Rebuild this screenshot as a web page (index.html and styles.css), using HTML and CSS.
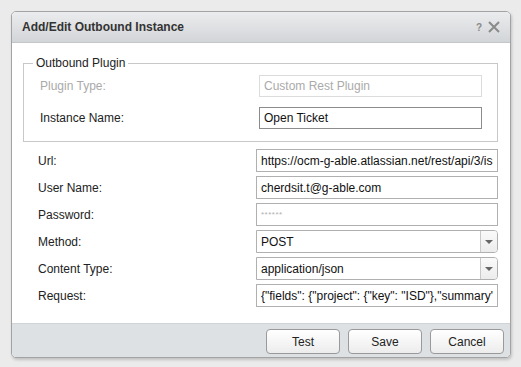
FILE: index.html
```html
<!DOCTYPE html>
<html lang="en">
<head>
    <meta charset="UTF-8">
    <meta name="viewport" content="width=device-width, initial-scale=1.0">
    <title>Add/Edit Outbound Instance</title>
    <link rel="stylesheet" href="styles.css">
</head>
<body>
    <div class="dialog">
        <!-- Title bar -->
        <div class="dialog-header">
            <span class="dialog-title">Add/Edit Outbound Instance</span>
            <span class="header-tools">
                <span class="help-icon">?</span>
                <svg class="close-icon" width="12" height="12" viewBox="0 0 12 12">
                    <path d="M1 1 L11 11 M11 1 L1 11" stroke="#8a8a8a" stroke-width="2" fill="none"/>
                </svg>
            </span>
        </div>

        <div class="dialog-body">
            <fieldset class="plugin-box">
                <legend>Outbound Plugin</legend>
                <div class="form-row">
                    <label class="disabled">Plugin Type:</label>
                    <input class="field field-disabled" type="text" value="Custom Rest Plugin" disabled>
                </div>
                <div class="form-row">
                    <label>Instance Name:</label>
                    <input class="field field-strong" type="text" value="Open Ticket">
                </div>
            </fieldset>

            <div class="form-grid">
                <label>Url:</label>
                <input class="field" type="text" value="https://ocm-g-able.atlassian.net/rest/api/3/issue">

                <label>User Name:</label>
                <input class="field" type="text" value="cherdsit.t@g-able.com">

                <label>Password:</label>
                <div class="field password"><span>******</span></div>

                <label>Method:</label>
                <div class="field select">
                    <span class="select-value">POST</span>
                    <span class="select-arrow"></span>
                </div>

                <label>Content Type:</label>
                <div class="field select">
                    <span class="select-value">application/json</span>
                    <span class="select-arrow"></span>
                </div>

                <label>Request:</label>
                <input class="field" type="text" value='{"fields": {"project": {"key": "ISD"},"summary": "Ticket"}}'>
            </div>
        </div>

        <!-- Buttons -->
        <div class="dialog-footer">
            <button class="btn">Test</button>
            <button class="btn">Save</button>
            <button class="btn">Cancel</button>
        </div>
    </div>
</body>
</html>
```

FILE: styles.css
```css
body {
    margin: 0;
    padding: 11px;
    background-color: #ebebeb;
    font-family: "Liberation Sans", Arial, sans-serif;
    font-size: 12px;
    color: #222;
}

.dialog {
    width: 498px;
    border: 1px solid #a3a3a3;
    border-radius: 5px;
    background-color: #fff;
    box-shadow: 1px 2px 3px rgba(0, 0, 0, 0.18);
    overflow: hidden;
}

.dialog-header {
    height: 30px;
    display: flex;
    align-items: center;
    justify-content: space-between;
    padding: 0 10px 0 10px;
    background: linear-gradient(#ebecee, #d2d5d8);
    border-bottom: 1px solid #c4c7ca;
}
.dialog-title {
    font-weight: bold;
    color: #333;
}
.header-tools {
    display: flex;
    align-items: center;
    gap: 6px;
}
.help-icon {
    font-size: 10px;
    font-weight: bold;
    color: #8a8a8a;
}

.dialog-body {
    padding: 13px 12px 16px 11px;
}

.plugin-box {
    margin: 0 0 7px 0;
    padding: 5px 15px 12px 16px;
    border: 1px solid #c8c8c8;
}
.plugin-box legend {
    margin-left: -7px;
    padding: 0 3px;
    color: #222;
}

.form-row {
    display: grid;
    grid-template-columns: 219px 1fr;
    align-items: center;
    margin-bottom: 10px;
}
.form-row:last-child {
    margin-bottom: 0;
}

.form-grid {
    display: grid;
    grid-template-columns: 218px 1fr;
    row-gap: 4px;
    align-items: center;
    padding-left: 15px;
}

label {
    color: #222;
}
label.disabled {
    color: #aaa;
}

.field {
    box-sizing: border-box;
    height: 22px;
    margin: 0;
    padding: 0 4px;
    border: 1px solid #b0b0b0;
    font-family: "Liberation Sans", Arial, sans-serif;
    font-size: 12px;
    color: #111;
    background-color: #fff;
    outline: none;
}
.form-grid .field {
    height: 23px;
}
.field-disabled {
    border-color: #dcdcdc;
    color: #aaa;
}
.field-strong {
    border-color: #8c8c8c;
}

.password {
    display: flex;
    align-items: center;
}
.password span {
    font-size: 8px;
    color: #b0b0b0;
    letter-spacing: 0.5px;
}

.select {
    display: flex;
    align-items: center;
    padding-right: 0;
    border-radius: 0 4px 4px 0;
}
.select-value {
    flex: 1;
}
.select-arrow {
    width: 16px;
    height: 100%;
    border-left: 1px solid #c8c8c8;
    background: linear-gradient(#fafafa, #ececec);
    border-radius: 0 3px 3px 0;
    position: relative;
}
.select-arrow::after {
    content: "";
    position: absolute;
    left: 4px;
    top: 9px;
    border-left: 4px solid transparent;
    border-right: 4px solid transparent;
    border-top: 4px solid #666;
}

.dialog-footer {
    height: 33px;
    display: flex;
    justify-content: flex-end;
    align-items: center;
    gap: 8px;
    padding: 0 6px 0 0;
    background-color: #dde1e4;
    border-top: 1px solid #d0d4d7;
}
.btn {
    width: 74px;
    height: 25px;
    margin-top: 2px;
    border: 1px solid #9a9a9a;
    border-radius: 4px;
    background: linear-gradient(#ffffff, #ececec);
    font-family: "Liberation Sans", Arial, sans-serif;
    font-size: 12px;
    color: #222;
    cursor: pointer;
}
```
